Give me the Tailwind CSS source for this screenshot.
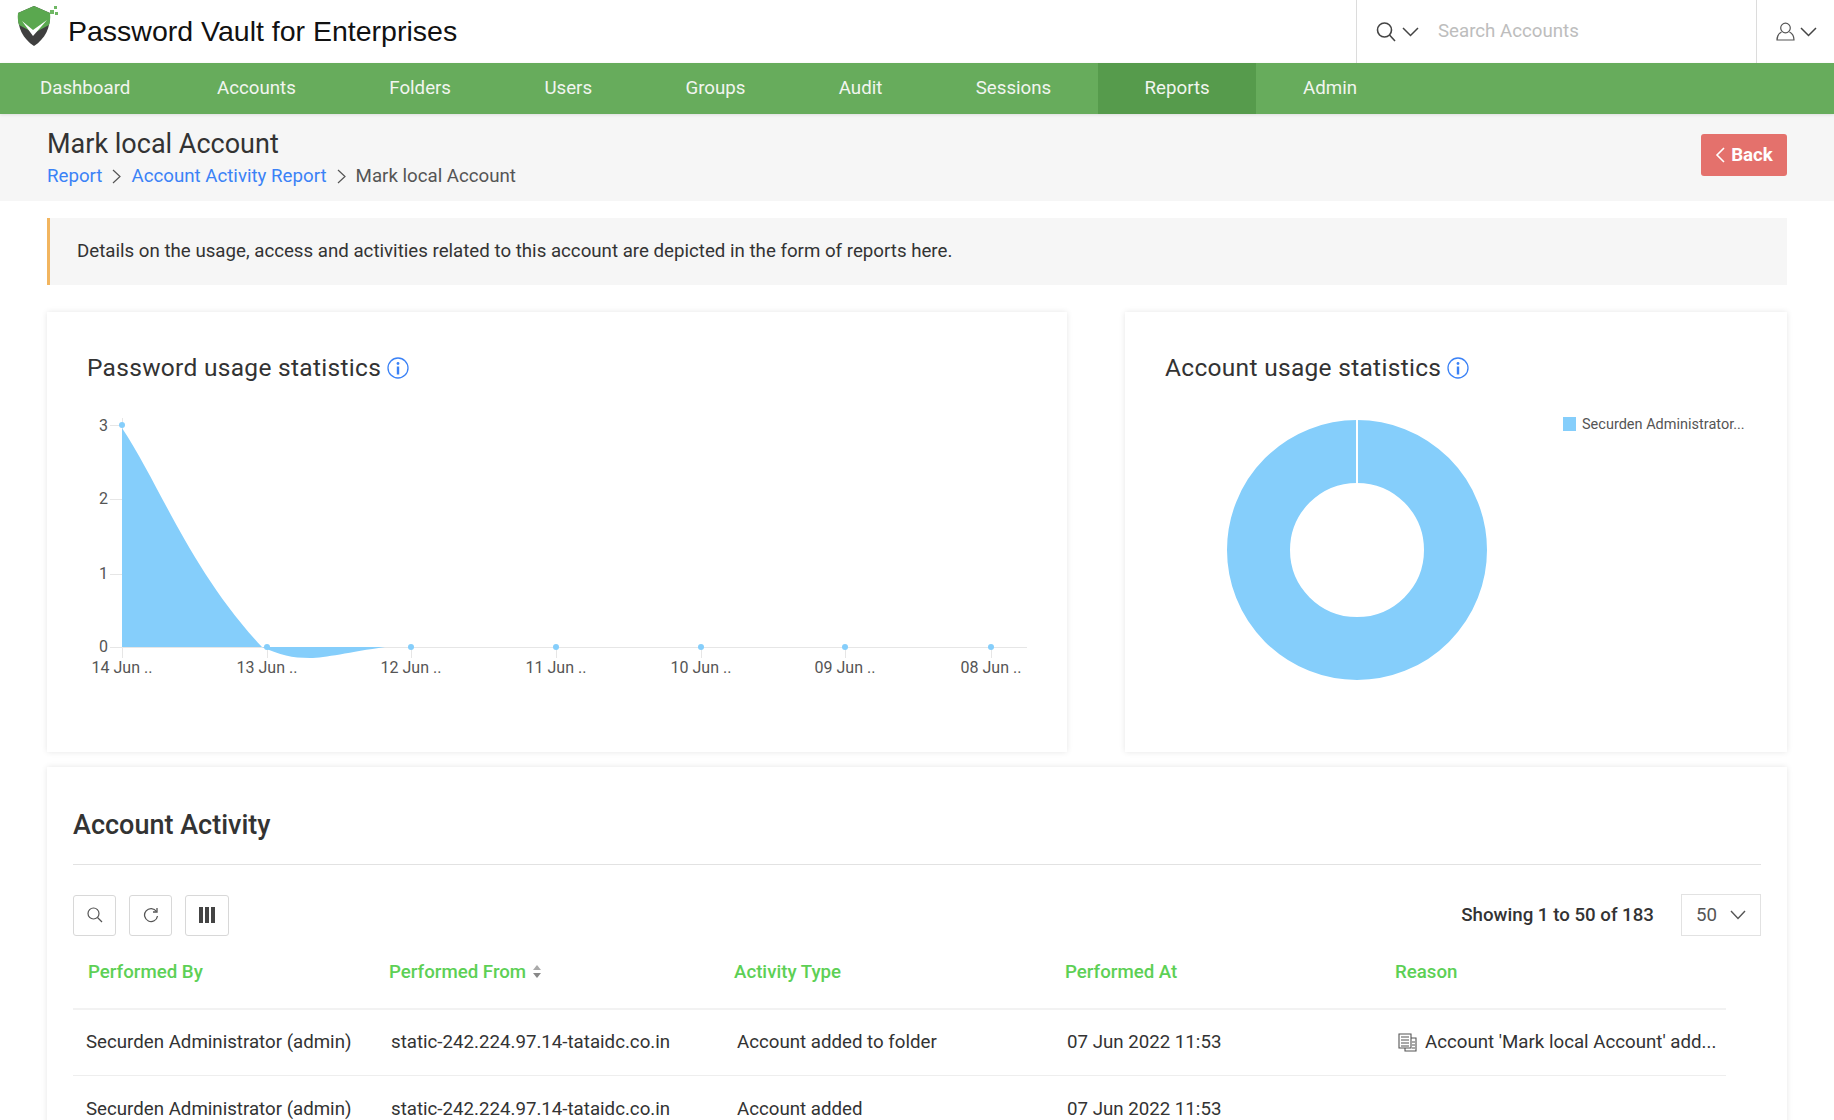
<!DOCTYPE html>
<html><head><meta charset="utf-8"><script src="https://cdn.jsdelivr.net/npm/@tailwindcss/browser@4"></script></head>
<body class="w-[1834px] h-[1120px] overflow-hidden bg-white font-['Roboto',sans-serif] text-[#333]">
<header class="h-[63px] flex items-center bg-white">
  <svg class="ml-[17px] mt-[-11px]" width="41" height="42" viewBox="0 0 41 42"><path d="M1 8 L17 1 L33 8 C34 22 28 34 17 41 C6 34 0 22 1 8Z" fill="#3f3f3f"/><path d="M1 8 L17 1 L33 8 C33.5 13 33 17 32 20 L17 28 L2 20 C1 17 0.5 13 1 8Z" fill="#5aa84f"/><path d="M5 16 L16 31 L30 15 L16 25Z" fill="#fff"/><rect x="33" y="5" width="4" height="4" fill="#6fb764"/><rect x="37" y="1" width="3" height="3" fill="#6fb764"/><rect x="38" y="7" width="3" height="3" fill="#6fb764"/></svg>
  <div class="ml-[10px] font-['Liberation_Sans',sans-serif] text-[28.5px] text-[#111] leading-none">Password Vault for Enterprises</div>
  <div class="ml-auto h-full w-[401px] border-x border-[#dcdcdc] flex items-center">
    <svg class="ml-[18px]" width="22" height="22" viewBox="0 0 22 22" fill="none" stroke="#444" stroke-width="1.6"><circle cx="9.5" cy="9" r="7"/><path d="M14.5 14 L20 20"/></svg>
    <svg class="ml-[5px]" width="17" height="10" viewBox="0 0 17 10" fill="none" stroke="#444" stroke-width="1.5"><path d="M1 1 L8.5 8.5 L16 1"/></svg>
    <span class="ml-[19px] text-[18.7px] text-[#bdbdbd]">Search Accounts</span>
  </div>
  <div class="w-[77px] h-full flex items-center">
    <svg class="ml-[19px]" width="19" height="19" viewBox="0 0 19 19" fill="none" stroke="#555" stroke-width="1.2"><circle cx="9.5" cy="6" r="4.8"/><path d="M5.5 10 C2.5 11.5 1 14 1 18 H18 C18 14 16.5 11.5 13.5 10"/></svg>
    <svg class="ml-[5px]" width="17" height="10" viewBox="0 0 17 10" fill="none" stroke="#444" stroke-width="1.5"><path d="M1 1 L8.5 8.5 L16 1"/></svg>
  </div>
</header>
<nav class="h-[51px] bg-[#67ac5c] flex text-[18.7px] text-[#f1f5ef] shadow-[0_1px_3px_rgba(0,0,0,0.1)] relative">
  <a class="px-[40px] flex items-center">Dashboard</a>
  <a class="px-[46.7px] flex items-center">Accounts</a>
  <a class="px-[46.7px] flex items-center">Folders</a>
  <a class="px-[46.7px] flex items-center">Users</a>
  <a class="px-[46.7px] flex items-center">Groups</a>
  <a class="px-[46.7px] flex items-center">Audit</a>
  <a class="px-[46.7px] flex items-center">Sessions</a>
  <a class="px-[46.7px] flex items-center bg-[#569b4c]">Reports</a>
  <a class="px-[46.7px] flex items-center">Admin</a>
</nav>
<section class="h-[87px] bg-[#f6f6f6] px-[47px] flex items-start justify-between">
  <div>
    <h1 class="text-[27px] leading-[32px] mt-[14px] text-[#333]">Mark local Account</h1>
    <div class="flex items-center text-[18.7px] leading-[22px] mt-[5px]">
      <a class="text-[#3b82f6]">Report</a>
      <svg class="mx-[10px]" width="9" height="15" viewBox="0 0 9 15" fill="none" stroke="#555" stroke-width="1.2"><path d="M1 1 L8 7.5 L1 14"/></svg>
      <a class="text-[#3b82f6]">Account Activity Report</a>
      <svg class="mx-[10px]" width="9" height="15" viewBox="0 0 9 15" fill="none" stroke="#555" stroke-width="1.2"><path d="M1 1 L8 7.5 L1 14"/></svg>
      <span class="text-[#555]">Mark local Account</span>
    </div>
  </div>
  <button class="mt-[20px] w-[86px] h-[42px] rounded-[3px] bg-[#e4716c] text-white font-bold text-[18.7px] flex items-center justify-center gap-[6px]">
    <svg width="10" height="16" viewBox="0 0 10 16" fill="none" stroke="#fff" stroke-width="1.6"><path d="M9 1 L2 8 L9 15"/></svg>Back</button>
</section>
<main class="px-[47px] pt-[17px]">
  <div class="h-[67px] bg-[#f6f6f6] border-l-[3px] border-[#f2b55f] pl-[27px] flex items-center text-[18.7px] text-[#333]">Details on the usage, access and activities related to this account are depicted in the form of reports here.</div>
  <div class="flex justify-between mt-[27px]">
    <div class="w-[1020px] h-[440px] bg-white shadow-[0_0_6px_rgba(0,0,0,0.1)] relative">
      <h2 class="absolute left-[40px] top-[41px] flex items-center gap-[6px] text-[24.5px] leading-[30px] text-[#333] tracking-[0.3px]">Password usage statistics
        <svg width="22" height="22" viewBox="0 0 22 22"><circle cx="11" cy="11" r="10" fill="none" stroke="#3b82f6" stroke-width="1.3"/><circle cx="11" cy="6.5" r="1.4" fill="#3b82f6"/><rect x="9.8" y="9.5" width="2.4" height="8" fill="#3b82f6"/></svg>
      </h2>
      <svg class="absolute left-0 top-0" width="1020" height="440" viewBox="47 312 1020 440" font-family="Roboto,sans-serif" font-size="16" fill="#555">
        <g stroke="#e6e6e6" stroke-width="1">
          <path d="M110 425.5H122M110 499.5H122M110 574.5H122M110 647.5H1027"/>
          <path d="M122.5 418V658M267.5 647V658M411.5 647V658M556.5 647V658M701.5 647V658M845.5 647V658M991.5 647V658"/>
        </g>
        <path d="M122 428 C160 485 190 570 262 647 L385 647 C350 652 325 658 310 658 C292 658 280 655 262 647 L122 647Z" fill="#85cefb"/>
        <g fill="#85cefb"><circle cx="122" cy="425" r="3"/><circle cx="267" cy="647" r="3"/><circle cx="411" cy="647" r="3"/><circle cx="556" cy="647" r="3"/><circle cx="701" cy="647" r="3"/><circle cx="845" cy="647" r="3"/><circle cx="991" cy="647" r="3"/></g>
        <g text-anchor="end"><text x="108" y="431">3</text><text x="108" y="504">2</text><text x="108" y="579">1</text><text x="108" y="652">0</text></g>
        <g text-anchor="middle"><text x="122" y="673">14 Jun ..</text><text x="267" y="673">13 Jun ..</text><text x="411" y="673">12 Jun ..</text><text x="556" y="673">11 Jun ..</text><text x="701" y="673">10 Jun ..</text><text x="845" y="673">09 Jun ..</text><text x="991" y="673">08 Jun ..</text></g>
      </svg>
    </div>
    <div class="w-[662px] h-[440px] bg-white shadow-[0_0_6px_rgba(0,0,0,0.1)] relative">
      <h2 class="absolute left-[40px] top-[41px] flex items-center gap-[6px] text-[24.5px] leading-[30px] text-[#333] tracking-[0.3px]">Account usage statistics
        <svg width="22" height="22" viewBox="0 0 22 22"><circle cx="11" cy="11" r="10" fill="none" stroke="#3b82f6" stroke-width="1.3"/><circle cx="11" cy="6.5" r="1.4" fill="#3b82f6"/><rect x="9.8" y="9.5" width="2.4" height="8" fill="#3b82f6"/></svg>
      </h2>
      <svg class="absolute left-0 top-0" width="662" height="440" viewBox="1119 312 662 440" font-family="Roboto,sans-serif" font-size="14.5" fill="#555">
        <circle cx="1351" cy="550" r="98.5" fill="none" stroke="#85cefb" stroke-width="63"/>
        <rect x="1350" y="418" width="2" height="66" fill="#fff"/>
        <rect x="1557" y="417" width="13" height="14" fill="#85cefb"/>
        <text x="1576" y="429">Securden Administrator...</text>
      </svg>
    </div>
  </div>
  <div class="mt-[15px] h-[400px] bg-white shadow-[0_0_6px_rgba(0,0,0,0.1)] px-[26px] pt-[38px]">
    <h2 class="text-[27px] leading-[40px] font-medium text-[#333]">Account Activity</h2>
    <div class="mt-[19px] border-t border-[#e2e2e2] pt-[29px] flex items-center">
      <button class="w-[43px] h-[41px] border border-[#d8d8d8] rounded-[3px] flex items-center justify-center"><svg width="16" height="16" viewBox="0 0 16 16" fill="none" stroke="#555" stroke-width="1.2"><circle cx="6.5" cy="6.5" r="5.5"/><path d="M10.5 10.5L15 15"/></svg></button>
      <button class="ml-[13px] w-[43px] h-[41px] border border-[#d8d8d8] rounded-[3px] flex items-center justify-center"><svg width="16" height="16" viewBox="0 0 16 16" fill="none" stroke="#555" stroke-width="1.3"><path d="M13.5 4.5 A6.5 6.5 0 1 0 14.5 9"/><path d="M14 1V5H10" /></svg></button>
      <button class="ml-[13px] w-[44px] h-[41px] border border-[#d8d8d8] rounded-[3px] flex items-center justify-center"><svg width="16" height="16" viewBox="0 0 16 16" fill="#444"><rect x="0" y="0" width="4" height="16"/><rect x="6" y="0" width="4" height="16"/><rect x="12" y="0" width="4" height="16"/></svg></button>
      <span class="ml-auto font-medium text-[18.7px] text-[#333]">Showing 1 to 50 of 183</span>
      <div class="ml-[27px] w-[80px] h-[42px] border border-[#e2e2e2] flex items-center justify-between px-[14px] text-[18.7px] text-[#555]">50<svg width="16" height="10" viewBox="0 0 16 10" fill="none" stroke="#555" stroke-width="1.4"><path d="M1 1 L8 8.5 L15 1"/></svg></div>
    </div>
    <div class="w-[1653px]">
      <div class="grid grid-cols-[331px_330px_331px_330px_331px] h-[74px] items-center border-b-2 border-[#f2f2f2] text-[18.7px] font-medium text-[#5dd055]">
        <span class="pl-[15px]">Performed By</span>
        <span class="flex items-center gap-[6px] ml-[-15px]">Performed From <svg width="10" height="15" viewBox="0 0 10 15" fill="#aaa"><path d="M5 1L9 6H1Z"/><path d="M5 14L9 9H1Z" fill="#888"/></svg></span>
        <span>Activity Type</span><span>Performed At</span><span>Reason</span>
      </div>
      <div class="grid grid-cols-[331px_330px_331px_330px_331px] h-[66px] items-center border-b border-[#eee] text-[18.7px] text-[#333]">
        <span class="pl-[13px]">Securden Administrator (admin)</span><span class="ml-[-13px]">static-242.224.97.14-tataidc.co.in</span><span class="pl-[3px]">Account added to folder</span><span class="pl-[2px]">07 Jun 2022 11:53</span>
        <span class="flex items-center gap-[7px] pl-[3px] whitespace-nowrap"><svg width="20" height="19" viewBox="0 0 20 19" fill="none" stroke="#555" stroke-width="1.1"><path d="M1 1H13V15H1Z"/><path d="M13 5H18V18H7V15"/><path d="M3 4H11M3 7H11M3 10H11M3 13H11M14 9H17M14 12H17M14 15H17"/></svg>Account 'Mark local Account' add...</span>
      </div>
      <div class="grid grid-cols-[331px_330px_331px_330px_331px] h-[66px] items-center text-[18.7px] text-[#333]">
        <span class="pl-[13px]">Securden Administrator (admin)</span><span class="ml-[-13px]">static-242.224.97.14-tataidc.co.in</span><span class="pl-[3px]">Account added</span><span class="pl-[2px]">07 Jun 2022 11:53</span><span></span>
      </div>
    </div>
  </div>
</main>
</body></html>
